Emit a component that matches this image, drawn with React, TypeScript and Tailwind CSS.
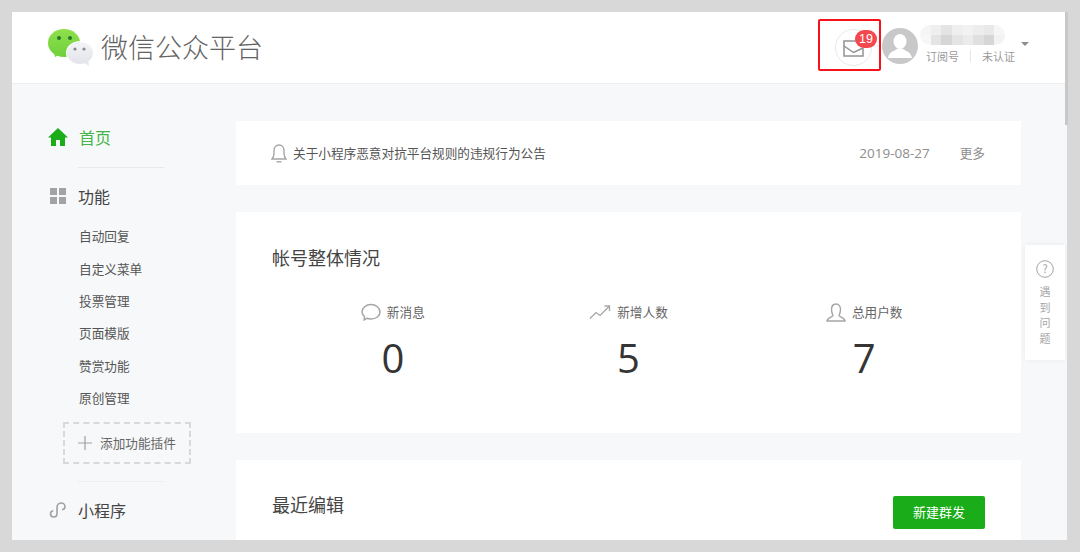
import React from "react";

const font = { fontFamily: '"Noto Sans CJK SC", "Liberation Sans", sans-serif' };

function Logo() {
  return (
    <svg width="46" height="38" viewBox="0 0 46 38">
      <defs>
        <linearGradient id="g1" x1="0" y1="0" x2="0" y2="1">
          <stop offset="0" stopColor="#8fe04c" />
          <stop offset="1" stopColor="#6fd03c" />
        </linearGradient>
        <linearGradient id="g2" x1="0" y1="0" x2="0" y2="1">
          <stop offset="0" stopColor="#f3f4f7" />
          <stop offset="1" stopColor="#e2e4ea" />
        </linearGradient>
      </defs>
      <ellipse cx="16" cy="14" rx="16" ry="14" fill="url(#g1)" />
      <path d="M6 24 L7 28 L13 25 Z" fill="#78d53f" />
      <circle cx="11" cy="9" r="2" fill="#1f7a2a" />
      <circle cx="22" cy="9" r="2" fill="#1f7a2a" />
      <ellipse cx="32" cy="24" rx="14" ry="12" fill="#fff" />
      <ellipse cx="32" cy="24" rx="13" ry="11" fill="url(#g2)" />
      <path d="M35 33 L41 37 L40 31 Z" fill="#e4e6eb" />
      <circle cx="27" cy="20" r="1.6" fill="#8a8a8a" />
      <circle cx="36" cy="20" r="1.6" fill="#8a8a8a" />
    </svg>
  );
}

function SubItem({ children }: { children: React.ReactNode }) {
  return <div className="h-[32.4px] flex items-center pb-[3px] text-[12.65px] text-[#555]">{children}</div>;
}

function Stat({ icon, label, value }: { icon: React.ReactNode; label: string; value: string }) {
  return (
    <div className="flex-1 flex flex-col items-center">
      <div className="flex items-center gap-[6px] h-[24px] text-[12.65px] text-[#666]">
        {icon}
        <span className="pb-[2px]">{label}</span>
      </div>
      <div className="mt-[6px] text-[40px] leading-[56px] text-[#353535]" style={{ fontFamily: '"Open Sans", sans-serif' }}>{value}</div>
    </div>
  );
}

const blur = ["#f5f5f5", "#efefef", "#e4e4e4", "#efefef", "#f2f2f2", "#ededed", "#e9e9e9", "#f6f6f6"];
const blur2 = ["#f7f7f7", "#e4e4e4", "#d6d6d6", "#e4e4e4", "#ebebeb", "#e0e0e0", "#d6d6d6", "#f2f2f2"];

export default function App() {
  return (
    <div className="w-[1080px] h-[552px] bg-[#d8d8d8] pt-[12px] pl-[12px] pr-[13px] pb-[12px] overflow-hidden relative" style={font}>
      <div className="h-[528px] bg-[#f6f8f9] flex flex-col overflow-hidden">
        <header className="h-[72px] shrink-0 bg-white border-b border-[#eceef0] flex items-center pl-[36px] pr-[38px]">
          <Logo />
          <div className="ml-[7px] text-[27px] text-[#636363] font-light">微信公众平台</div>
          <div className="ml-auto flex items-center">
            <div className="relative w-[37px] h-[37px] rounded-full border border-[#e9e9e9] flex items-center justify-center">
              <svg width="21" height="17" viewBox="0 0 21 17" fill="none" stroke="#929292" strokeWidth="1.5" className="mr-[1px] mt-[1px]">
                <path d="M15 1H1V16H20V8" />
                <path d="M1 6L10.5 12.5L20 8" />
              </svg>
              <span className="absolute left-[19px] top-[0px] w-[22px] h-[18px] rounded-full bg-[#f4484f] text-white text-[12.5px] flex items-center justify-center" style={{ fontFamily: '"Liberation Sans", sans-serif' }}>19</span>
            </div>
            <div className="ml-[10px] mb-[3px] w-[36px] h-[36px] rounded-full bg-[#c8c8c8] overflow-hidden flex items-center justify-center shrink-0">
              <svg width="36" height="36" viewBox="0 0 36 36" fill="#fff">
                <ellipse cx="18" cy="13.5" rx="6.5" ry="7.5" />
                <path d="M6 30C7 24 12 23 15 21H21C24 23 29 24 30 30Z" />
              </svg>
            </div>
            <div className="ml-[2px] mb-[7px] flex flex-col w-[101px] shrink-0">
              <div className="flex flex-col w-[85px] h-[20px] rounded-full overflow-hidden shrink-0">
                <div className="flex h-[10px]">
                  {blur.map((c, i) => <div key={i} className="flex-1" style={{ background: c }} />)}
                </div>
                <div className="flex h-[10px]">
                  {blur2.map((c, i) => <div key={i} className="flex-1" style={{ background: c }} />)}
                </div>
              </div>
              <div className="mt-[4px] flex items-center text-[11px] leading-[14px] text-[#9a9a9a] pl-[6px] whitespace-nowrap">
                <span>订阅号</span>
                <span className="mx-[11px] w-px h-[12px] bg-[#e7e7e7]" />
                <span>未认证</span>
              </div>
            </div>
            <div className="mb-[7px] w-0 h-0 border-l-[4px] border-r-[4px] border-t-[4px] border-l-transparent border-r-transparent border-t-[#8d8d8d]" />
          </div>
        </header>

        <div className="flex flex-1 min-h-0 relative">
          <aside className="w-[224px] shrink-0 pl-[36px] pt-[37px]">
            <div className="flex items-center h-[32px] text-[16px] text-[#44b549]">
              <svg width="20" height="18" viewBox="0 0 20 18" fill="#1aad19">
                <path d="M10 0L20 9.5H17V18H12V12H8V18H3V9.5H0Z" />
              </svg>
              <span className="ml-[11px]">首页</span>
            </div>
            <div className="ml-[30px] w-[86px] h-px bg-[#e7e8ea] mt-[14px]" />
            <div className="mt-[12px] flex items-center h-[32px] text-[16px] text-[#444]">
              <div className="ml-[2px] w-[16px] h-[16px] grid grid-cols-2 gap-[2px]">
                <div className="bg-[#a3a3a3]" /><div className="bg-[#a3a3a3]" /><div className="bg-[#a3a3a3]" /><div className="bg-[#a3a3a3]" />
              </div>
              <span className="ml-[12px]">功能</span>
            </div>
            <div className="ml-[31px] mt-[9px]">
              <SubItem>自动回复</SubItem>
              <SubItem>自定义菜单</SubItem>
              <SubItem>投票管理</SubItem>
              <SubItem>页面模版</SubItem>
              <SubItem>赞赏功能</SubItem>
              <SubItem>原创管理</SubItem>
            </div>
            <div className="ml-[15px] mt-[7px] w-[128px] h-[42px] border-2 border-dashed border-[#d9d9d9] flex items-center pl-[13px] text-[12.65px] text-[#666]">
              <svg width="14" height="14" viewBox="0 0 14 14" stroke="#a0a0a0" strokeWidth="1.2">
                <path d="M7 0V14M0 7H14" />
              </svg>
              <span className="ml-[8px] pb-[2px]">添加功能插件</span>
            </div>
            <div className="ml-[30px] w-[86px] h-px bg-[#eceeef] mt-[17px]" />
            <div className="mt-[12px] flex items-center h-[32px] text-[16px] text-[#444]">
              <svg width="18" height="18" viewBox="0 0 18 18" fill="none" stroke="#a0a0a0" strokeWidth="1.6" className="ml-[1px]">
                <path d="M8 7V12.5C8 14.7 6.4 16 4.7 16C3 16 1.5 14.7 1.5 12.8C1.5 11.3 2.5 10 4.2 9.7" />
                <path d="M8 7C8 4 9.7 2 12 2C14.3 2 16 3.6 16 5.5C16 7.3 14.7 8.6 13 8.8" />
              </svg>
              <span className="ml-[11px]">小程序</span>
            </div>
          </aside>

          <main className="w-[785px] shrink-0 pt-[37px] flex flex-col gap-[27px]">
            <section className="h-[64px] shrink-0 bg-white flex items-center pl-[35px] pr-[36px] text-[12.65px] text-[#555]">
              <svg width="16" height="19" viewBox="0 0 16 19" fill="none" stroke="#a5a5a5" strokeWidth="1.4">
                <path d="M1 15C2.5 13.5 3 12 3 9V6.5C3 3.5 5 1 8 1C11 1 13 3.5 13 6.5V9C13 12 13.5 13.5 15 15Z" />
                <path d="M5.5 17.8H10.5" />
              </svg>
              <span className="ml-[6px] pb-[2px]">关于小程序恶意对抗平台规则的违规行为公告</span>
              <span className="ml-auto text-[#8d8d8d] text-[13.5px]" style={{ fontFamily: '"Open Sans", sans-serif' }}>2019-08-27</span>
              <span className="ml-[30px] pb-[2px] text-[#8d8d8d]">更多</span>
            </section>

            <section className="h-[221px] shrink-0 bg-white px-[36px] pt-[31px]">
              <h2 className="text-[18px] leading-[28px] text-[#444]">帐号整体情况</h2>
              <div className="mt-[29px] flex px-[3px]">
                <Stat
                  label="新消息"
                  value="0"
                  icon={
                    <svg width="20" height="18" viewBox="0 0 20 18" fill="none" stroke="#a5a5a5" strokeWidth="1.5">
                      <path d="M3.5 13.5C2 12.2 1 10.7 1 9C1 5 5 1.5 10 1.5C15 1.5 19 5 19 9C19 13 15 16 10 16C8.5 16 7.3 15.8 6 15.3L3.2 16.8Z" />
                    </svg>
                  }
                />
                <Stat
                  label="新增人数"
                  value="5"
                  icon={
                    <svg width="22" height="16" viewBox="0 0 22 16" fill="none" stroke="#a5a5a5" strokeWidth="1.3">
                      <path d="M1 14.5L7 8.5L11 11.5L20 2.5" />
                      <path d="M15.5 2H20.5V7" />
                    </svg>
                  }
                />
                <Stat
                  label="总用户数"
                  value="7"
                  icon={
                    <svg width="20" height="19" viewBox="0 0 20 19" fill="none" stroke="#a5a5a5" strokeWidth="1.4">
                      <path d="M7 12.5C6.5 11.5 5.5 9.5 5.5 6.5C5.5 3 7.5 1 10 1C12.5 1 14.5 3 14.5 6.5C14.5 9.5 13.5 11.5 13 12.5C13 14 19 14.5 19 18H1C1 14.5 7 14 7 12.5Z" />
                    </svg>
                  }
                />
              </div>
            </section>

            <section className="flex-1 bg-white px-[36px] pt-[30px] flex justify-between items-start min-h-[120px]">
              <h2 className="text-[18px] leading-[28px] text-[#444]">最近编辑</h2>
              <button className="mt-[6px] w-[92px] h-[33px] pb-[2px] rounded-[2px] bg-[#1aad19] text-white text-[13px]">新建群发</button>
            </section>
          </main>

          <div className="absolute right-[2px] top-[161px] w-[40px] h-[115px] bg-white shadow-[0_0_6px_rgba(0,0,0,0.06)] flex flex-col items-center pt-[15px]">
            <svg width="18" height="18" viewBox="0 0 18 18" fill="none" stroke="#a3a3a3" strokeWidth="1">
              <circle cx="9" cy="9" r="8.3" />
              <text x="9" y="13" textAnchor="middle" fontSize="11" fill="#a3a3a3" stroke="none">?</text>
            </svg>
            <div className="mt-[6px] w-[12px] text-[11px] leading-[15.5px] text-[#a5a5a5] text-center">遇到问题</div>
          </div>
        </div>
      </div>
      <div className="absolute left-[818px] top-[19px] w-[63px] h-[52px] border-2 border-[#f5121a] rounded-[2px]" />
      <div className="absolute left-[1065px] top-[12px] w-[3px] h-[113px] bg-[#c8c8c8]" />
    </div>
  );
}
